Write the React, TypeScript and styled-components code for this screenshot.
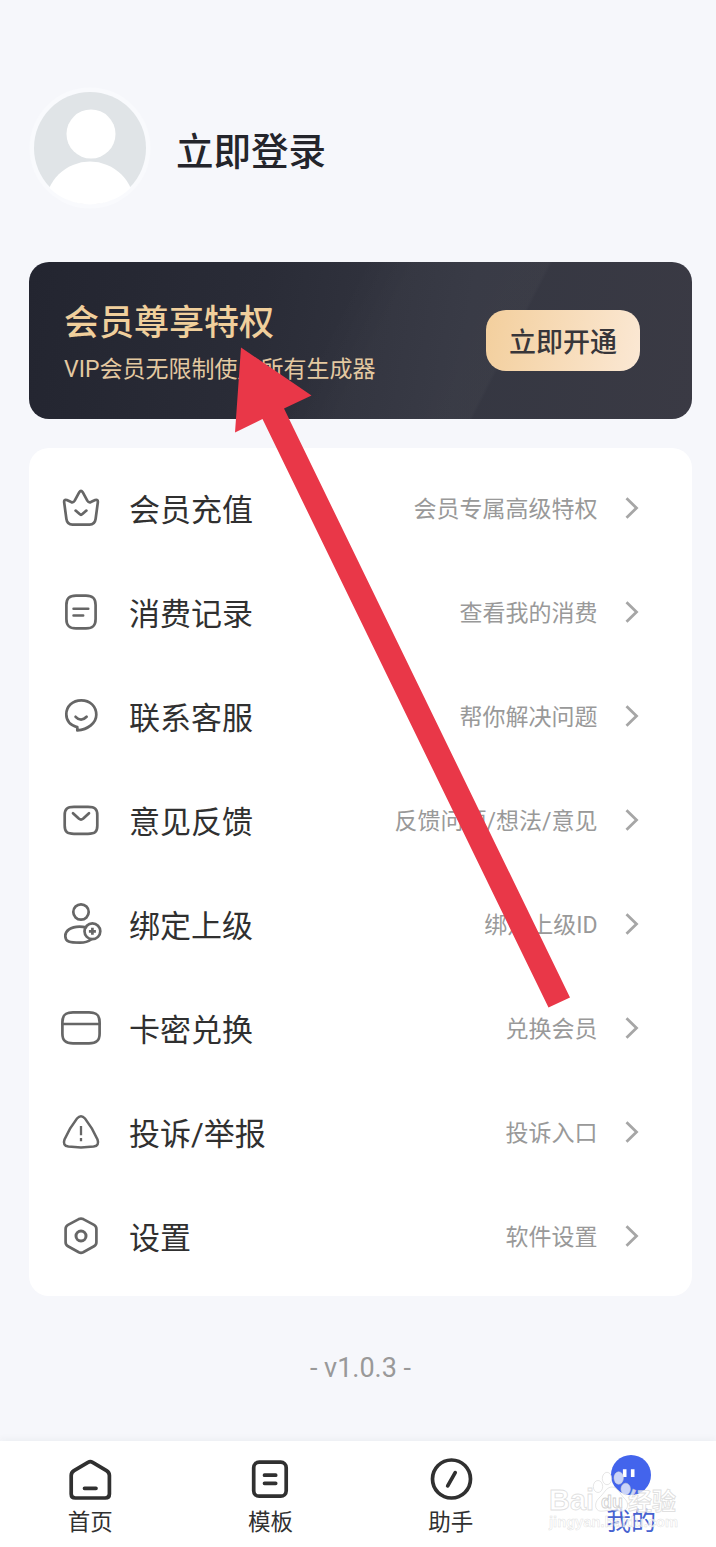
import React from "react";
import styled, { createGlobalStyle } from "styled-components";

const GlobalStyle = createGlobalStyle`
  * { box-sizing: border-box; }
  body {
    margin: 0;
    background: #f6f7fb;
    font-family: Roboto, "Noto Sans CJK SC", sans-serif;
    color: #303030;
  }
`;

const Screen = styled.div`
  position: relative;
  width: 716px;
  height: 1547px;
  display: flex;
  flex-direction: column;
  overflow: hidden;
  background: #f6f7fb;
`;

const Profile = styled.header`
  display: flex;
  align-items: center;
  gap: 24px;
  height: 262px;
  padding: 34px 0 0 28px;
`;

const UserName = styled.h1`
  margin: 7px 0 0;
  font-size: 37.5px;
  line-height: 54px;
  font-weight: 500;
  color: #24252b;
`;

const Banner = styled.section`
  display: flex;
  align-items: center;
  justify-content: space-between;
  height: 157px;
  margin: 0 24px 0 29px;
  padding: 0 52px 0 35px;
  border-radius: 20px;
  background:
    linear-gradient(117deg, transparent 45%, rgba(255, 255, 255, 0.02) 52%, rgba(255, 255, 255, 0.025) 70%, transparent 70.5%),
    linear-gradient(100deg, #232530 0%, #2a2c37 35%, #353742 65%, #3a3a44 100%);
`;

const BannerText = styled.div`
  display: flex;
  flex-direction: column;
  padding-top: 6px;
  color: #f0cf9c;
`;

const BannerTitle = styled.h2`
  margin: 0;
  font-size: 35px;
  line-height: 50px;
  font-weight: 500;
`;

const BannerNote = styled.p`
  margin: 3px 0 1px;
  font-size: 23px;
  line-height: 36px;
  color: #e4c9a1;
`;

const OpenButton = styled.button`
  width: 154px;
  height: 61px;
  padding: 0;
  border: 0;
  border-radius: 20px;
  background: linear-gradient(100deg, #f3cf9d, #fbe8d4);
  color: #38363a;
  font-family: inherit;
  font-size: 27px;
  font-weight: 500;
`;

const Menu = styled.ul`
  list-style: none;
  margin: 29px 24px 0 29px;
  padding: 8px 52.5px 8px 30px;
  border-radius: 20px;
  background: #fff;
`;

const MenuRow = styled.li`
  display: flex;
  align-items: center;
  height: 104px;
`;

const MenuLabel = styled.span`
  flex: 1;
  margin: 6px 0 0 26px;
  font-size: 31px;
  line-height: 44px;
  color: #303030;
`;

const MenuHint = styled.span`
  margin: 4px 26px 0 0;
  font-size: 23px;
  line-height: 34px;
  color: #999;
`;

const Version = styled.p`
  margin: 53px 0 0 5px;
  text-align: center;
  font-size: 27px;
  line-height: 38px;
  color: #999;
`;

const TabBar = styled.nav`
  display: flex;
  height: 106px;
  margin-top: auto;
  background: #fff;
  box-shadow: 0 -3px 6px rgba(40, 45, 70, 0.035);
`;

const Tab = styled.div<{ $active?: boolean }>`
  flex: none;
  width: 180.3px;
  display: flex;
  flex-direction: column;
  align-items: center;
  padding-top: 12px;
  font-size: ${(p) => (p.$active ? "25px" : "22.5px")};
  line-height: 34px;
  color: ${(p) => (p.$active ? "#4661d0" : "#303030")};
`;

const Arrow = styled.svg`
  position: absolute;
  left: 0;
  top: 0;
  pointer-events: none;
`;

const Watermark = styled.svg`
  position: absolute;
  left: 540px;
  top: 1460px;
  pointer-events: none;
`;

const MenuIcon = ({ children }: { children: React.ReactNode }) => (
  <svg width="44" height="44" viewBox="0 0 44 44" fill="none" stroke="#666" strokeWidth="2.7" strokeLinecap="round" strokeLinejoin="round">
    {children}
  </svg>
);

const icons = {
  crown: (
    <path d="M20.3 6.2Q22 3.5 23.7 6.2L28.3 14.6Q29.6 16.8 31.8 16.1L36.2 14.1Q39.3 13 38.8 16.6L36.6 33Q35.8 38.6 30.5 38.6H13.5Q8.2 38.6 7.4 33L5.2 16.6Q4.7 13 7.8 14.1L12.2 16.1Q14.4 16.8 15.7 14.6ZM16.6 24.6L20.6 28.1Q22 29.4 23.4 28.1L27.4 24.6" />
  ),
  bill: (
    <>
      <path d="M17 5.6H27C34 5.6 36.6 8.5 36.6 15V29C36.6 35.5 34 38.4 27 38.4H17C10 38.4 7.4 35.5 7.4 29V15C7.4 8.5 10 5.6 17 5.6Z" />
      <path d="M14.5 18.7H29.3M14.5 25.5H24.2" strokeWidth="2.5" />
    </>
  ),
  chat: (
    <path d="M18.3 33.2V36.4C29 35.6 37.3 29 37.3 20.8C37.3 12.3 31 6.3 22.3 6.3S7.3 12.3 7.3 20.3C7.3 26.5 11.4 31.3 18.3 33.2M16.6 22.8Q22 28.6 27.6 22.8" />
  ),
  mail: (
    <>
      <path d="M15 8.9H29C36 8.9 38.3 11 38.3 17V27.7C38.3 33.7 36 35.8 29 35.8H15C8 35.8 5.7 33.7 5.7 27.7V17C5.7 11 8 8.9 15 8.9Z" />
      <path d="M14 15.2L20 20.8Q22 22.4 24 20.8L30 15.2" />
    </>
  ),
  bind: (
    <>
      <circle cx="22" cy="10" r="7.7" />
      <path d="M27 25.3Q24 24.7 20.5 24.7C11.5 24.7 6.3 29 6.3 34C6.3 40 10.5 40.7 21 40.7Q28 40.7 32 37.5" />
      <circle cx="33.4" cy="29.3" r="7.9" />
      <path d="M33.4 25.8V32.8M29.9 29.3H36.9" strokeLinecap="butt" />
    </>
  ),
  card: (
    <>
      <path d="M14 6.4H30C37.5 6.4 40.6 9 40.6 16V27.7C40.6 34.7 37.5 37.3 30 37.3H14C6.5 37.3 3.4 34.7 3.4 27.7V16C3.4 9 6.5 6.4 14 6.4Z" />
      <path d="M3.5 18H40.5" strokeWidth="2.5" />
    </>
  ),
  alert: (
    <>
      <path d="M18 8.5Q22 3.9 26 8.5Q33.5 18 38.5 29.5Q40.7 35.6 34.6 36.6Q22 38.2 9.4 36.6Q3.3 35.6 5.5 29.5Q10.5 18 18 8.5Z" strokeWidth="2.5" />
      <path d="M22 16V25.2M22 28V31.2" strokeWidth="2.3" strokeLinecap="butt" />
    </>
  ),
  gear: (
    <>
      <path d="M19.8 5.1Q22 4.1 24.2 5.1L35 10.9Q37.4 12.2 37.4 15V28.2Q37.4 31 35 32.3L24.2 38.3Q22 39.3 19.8 38.3L9 32.3Q6.6 31 6.6 28.2V15Q6.6 12.2 9 10.9Z" />
      <circle cx="22" cy="22" r="5" strokeWidth="3" />
    </>
  ),
};

const rows: { icon: keyof typeof icons; label: string; hint: string }[] = [
  { icon: "crown", label: "会员充值", hint: "会员专属高级特权" },
  { icon: "bill", label: "消费记录", hint: "查看我的消费" },
  { icon: "chat", label: "联系客服", hint: "帮你解决问题" },
  { icon: "mail", label: "意见反馈", hint: "反馈问题/想法/意见" },
  { icon: "bind", label: "绑定上级", hint: "绑定上级ID" },
  { icon: "card", label: "卡密兑换", hint: "兑换会员" },
  { icon: "alert", label: "投诉/举报", hint: "投诉入口" },
  { icon: "gear", label: "设置", hint: "软件设置" },
];

const Chevron = () => (
  <svg width="16" height="24" viewBox="0 0 16 24" fill="none" stroke="#a6a6a6" strokeWidth="2.8">
    <path d="M2.5 2.3L12.5 12L2.5 21.7" />
  </svg>
);

const Avatar = () => (
  <svg width="124" height="124" viewBox="0 0 124 124">
    <defs>
      <clipPath id="avatarClip"><circle cx="62" cy="61" r="57.5" /></clipPath>
    </defs>
    <circle cx="62" cy="62" r="60.5" fill="#f9fafd" />
    <circle cx="62" cy="62" r="56" fill="#e0e4e7" />
    <circle cx="63" cy="48" r="24.5" fill="#fff" />
    <circle cx="62" cy="120" r="44.5" fill="#fff" clipPath="url(#avatarClip)" />
  </svg>
);

const TabIcon = ({ children }: { children: React.ReactNode }) => (
  <svg width="52" height="52" viewBox="0 0 52 52" fill="none" stroke="#303030" strokeWidth="3.7" strokeLinecap="round" strokeLinejoin="round">
    {children}
  </svg>
);

export default function App() {
  return (
    <>
      <GlobalStyle />
      <Screen>
        <Profile>
          <Avatar />
          <UserName>立即登录</UserName>
        </Profile>

        <Banner>
          <BannerText>
            <BannerTitle>会员尊享特权</BannerTitle>
            <BannerNote>VIP会员无限制使用所有生成器</BannerNote>
          </BannerText>
          <OpenButton>立即开通</OpenButton>
        </Banner>

        <Menu>
          {rows.map((row) => (
            <MenuRow key={row.icon}>
              <MenuIcon>{icons[row.icon]}</MenuIcon>
              <MenuLabel>{row.label}</MenuLabel>
              <MenuHint>{row.hint}</MenuHint>
              <Chevron />
            </MenuRow>
          ))}
        </Menu>

        <Version>- v1.0.3 -</Version>

        <TabBar>
          <Tab>
            <TabIcon>
              <path d="M24 9.3Q26.3 8 28.6 9.3L42.5 17.6Q45.4 19.4 45.4 22.5V41Q45.4 45 41.2 45H11.4Q7.2 45 7.2 41V22.5Q7.2 19.4 10 17.6ZM20.5 35.3H32" />
            </TabIcon>
            首页
          </Tab>
          <Tab>
            <TabIcon>
              <rect x="9.7" y="9.2" width="32.5" height="34" rx="5.5" />
              <path d="M20.5 22.2H31.7M20.5 30.3H31.7" />
            </TabIcon>
            模板
          </Tab>
          <Tab>
            <TabIcon>
              <circle cx="26.5" cy="26" r="19" />
              <path d="M22.7 32.8L30.2 19.6" />
            </TabIcon>
            助手
          </Tab>
          <Tab $active>
            <TabIcon>
              <circle cx="26" cy="22" r="20" fill="#4364ec" stroke="none" />
              <path d="M19.7 16.2V24M27.7 16.2V24" stroke="#fff" strokeWidth="3.6" strokeLinecap="butt" />
            </TabIcon>
            我的
          </Tab>
        </TabBar>

        <Watermark width="150" height="80" viewBox="0 0 150 80" fill="#fff" fillOpacity="0.72" stroke="#d2d2d2" strokeOpacity="0.7" strokeWidth="0.8">
          <ellipse cx="58" cy="26.5" rx="4.7" ry="6" />
          <ellipse cx="67" cy="18.5" rx="4.7" ry="6.2" />
          <ellipse cx="78.7" cy="18" rx="4.7" ry="6.2" />
          <ellipse cx="85.7" cy="29" rx="4.7" ry="5.8" />
          <path d="M72 27C78 27 80 34 84 38C91 44 87 53 79 51Q72 49 64 51C55 53 53 44 59 38C64 34 66 27 72 27Z" />
          <g fontFamily="Liberation Sans, Noto Sans CJK SC, sans-serif" fontWeight="700" strokeWidth="0.9">
            <text x="9" y="50" fontSize="29" textLength="45" lengthAdjust="spacingAndGlyphs">Bai</text>
            <text x="61" y="48" fontSize="18" stroke="#bcbcbc">du</text>
            <text x="88" y="50" fontSize="24">经验</text>
            <text x="9" y="67" fontSize="15" strokeWidth="0.5" textLength="129" lengthAdjust="spacingAndGlyphs">jingyan.baidu.com</text>
          </g>
        </Watermark>

        <Arrow width="716" height="1547" viewBox="0 0 716 1547">
          <path d="M241 347.5L311.5 395.5L284 408.5L570 997.5L548.5 1007.5L262.5 419L235 432.5Z" fill="#e93748" />
        </Arrow>
      </Screen>
    </>
  );
}
